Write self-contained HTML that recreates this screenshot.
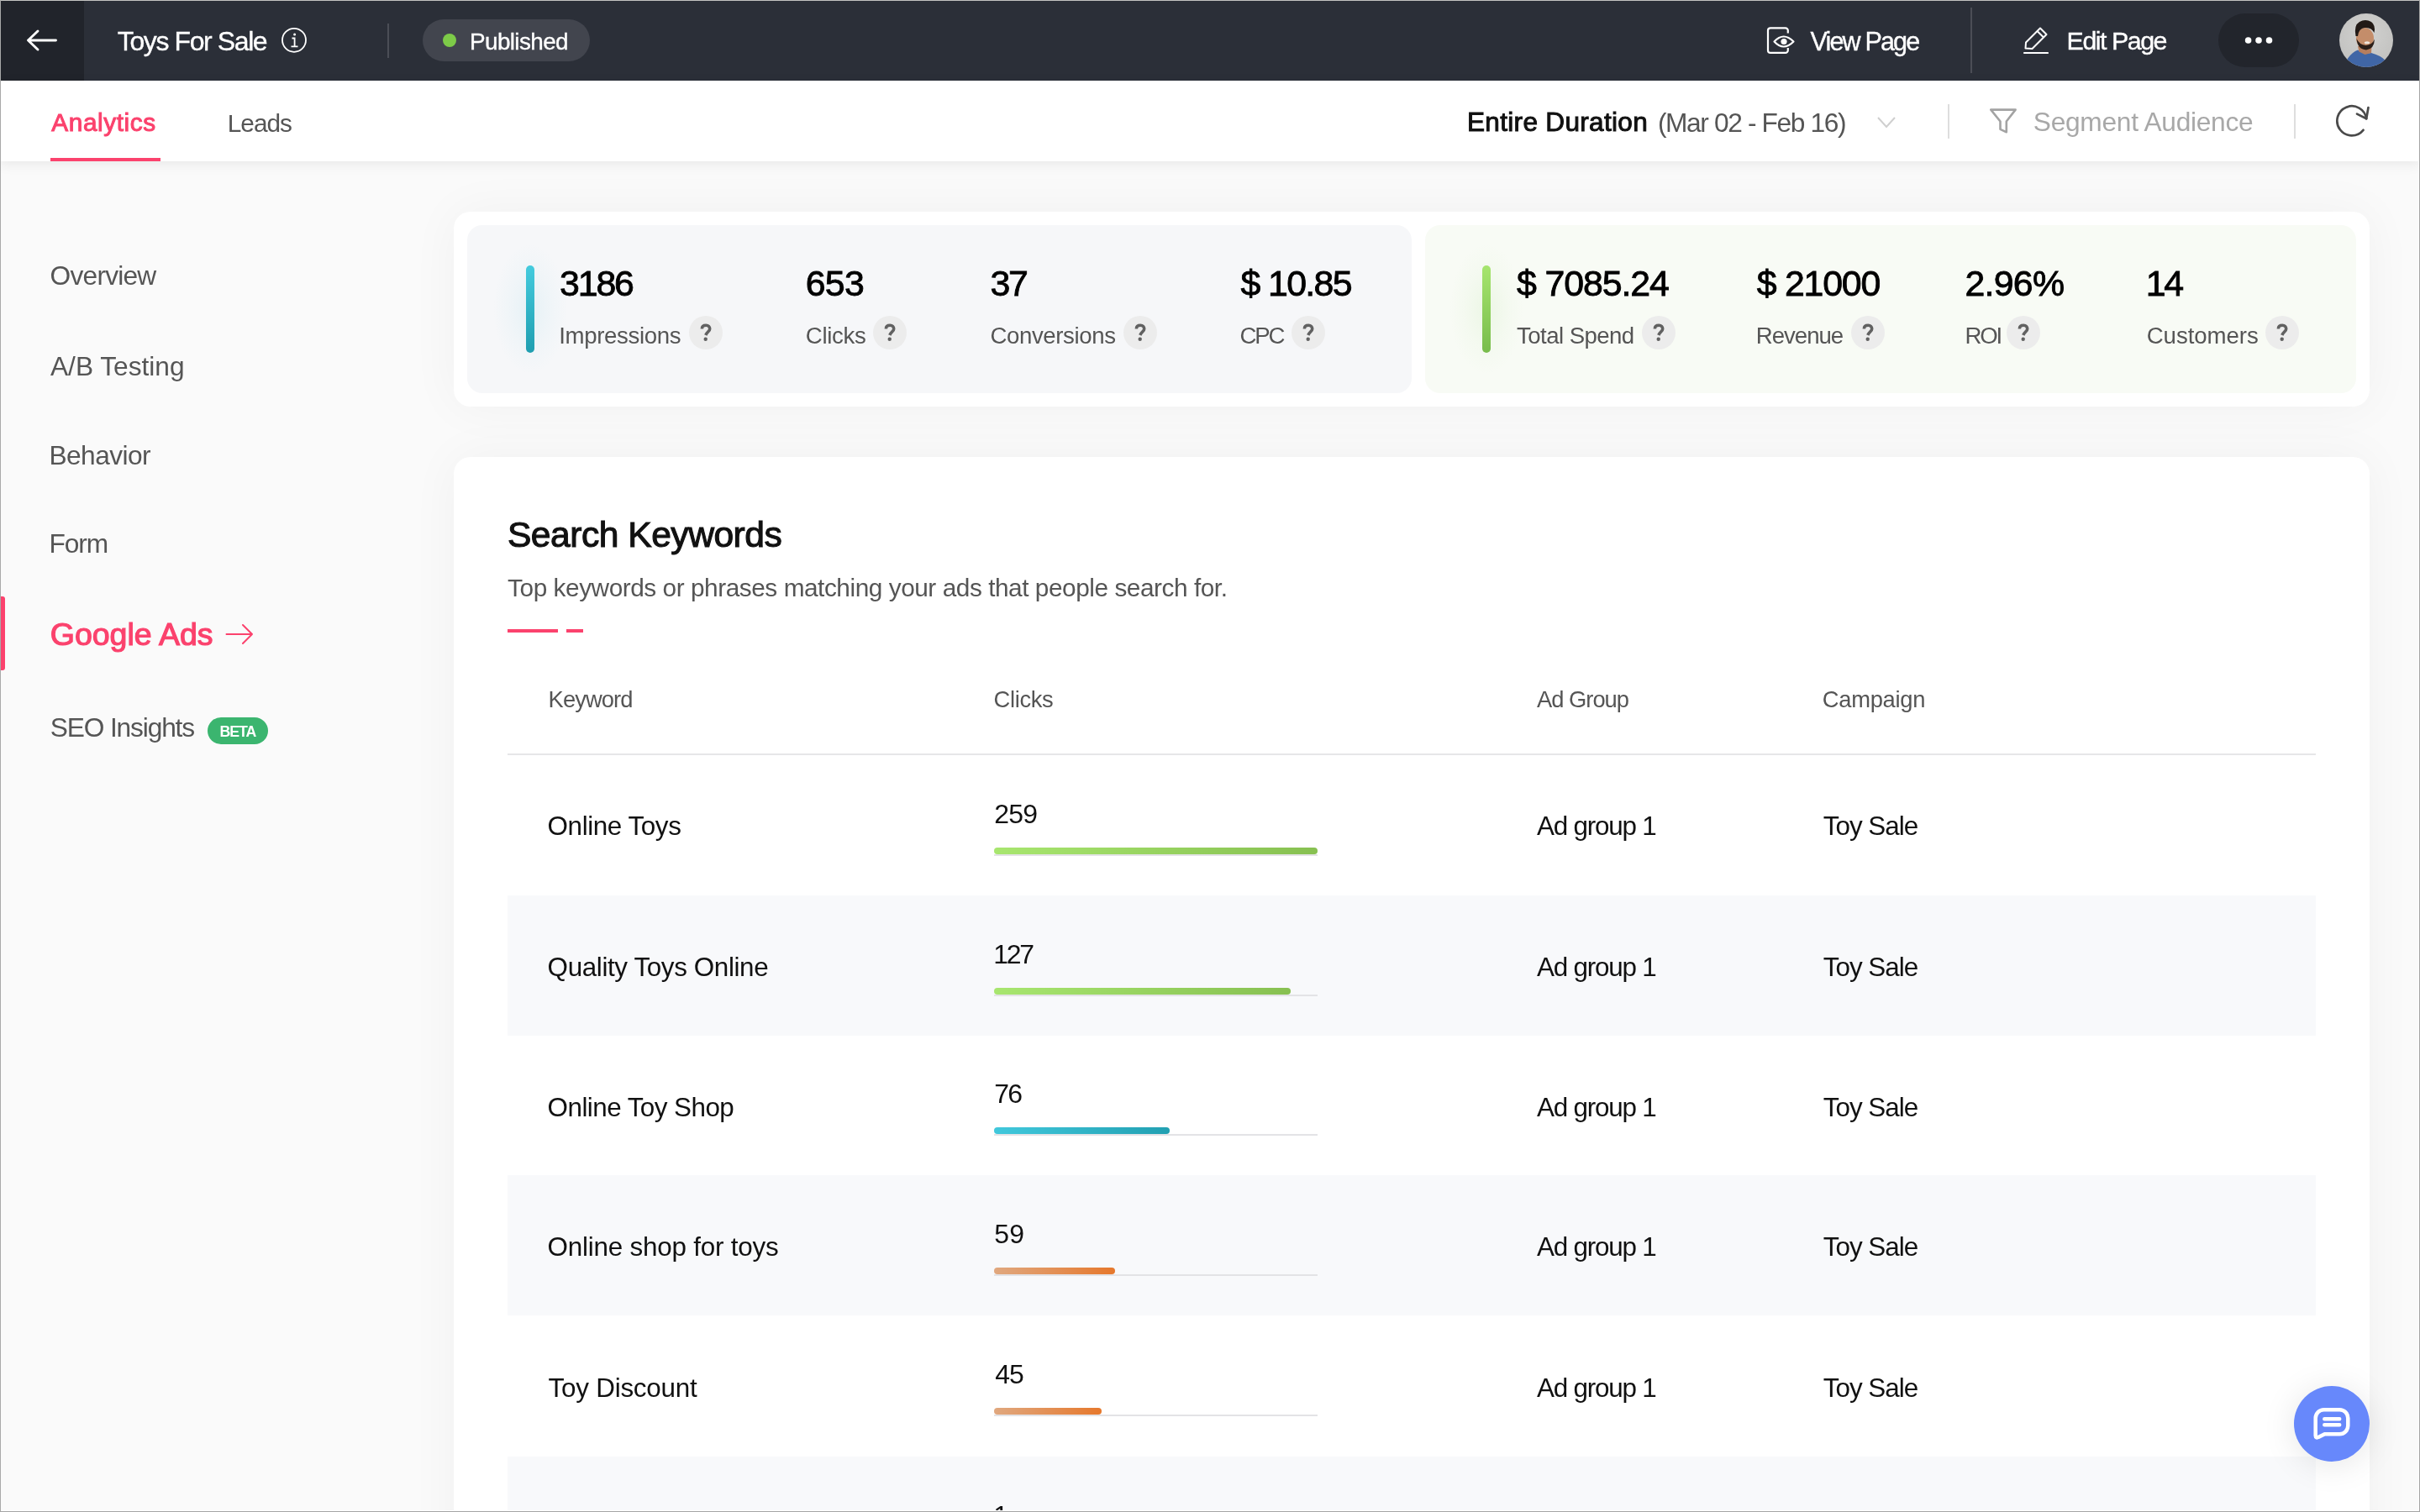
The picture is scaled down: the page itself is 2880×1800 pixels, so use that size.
<!DOCTYPE html>
<html><head><meta charset="utf-8"><style>
html,body{margin:0;padding:0;}
body{width:2880px;height:1800px;position:relative;overflow:hidden;background:#fafafa;font-family:"Liberation Sans",sans-serif;}
.abs{position:absolute;}
.t{position:absolute;white-space:nowrap;line-height:60px;font-family:"Liberation Sans",sans-serif;}
#tx{position:absolute;left:0;top:0;width:2880px;height:1800px;will-change:transform;}
.q{position:absolute;width:40px;height:40px;border-radius:20px;background:#ececec;}
</style></head><body>
<!-- top bar -->
<div class="abs" style="left:0;top:0;width:2880px;height:96px;background:#2b2f38"></div>
<div class="abs" style="left:0;top:0;width:100px;height:96px;background:#21242b"></div>
<div class="abs" style="left:461px;top:28px;width:2px;height:41px;background:#4b4e56"></div>
<div class="abs" style="left:503px;top:23px;width:199px;height:50px;border-radius:25px;background:#42454e"></div>
<div class="abs" style="left:527px;top:40px;width:16px;height:16px;border-radius:8px;background:#7dcb48"></div>
<div class="abs" style="left:2345px;top:9px;width:2px;height:78px;background:#4b4e56"></div>
<div class="abs" style="left:2640px;top:16px;width:96px;height:64px;border-radius:32px;background:#22252c"></div>
<!-- tab bar -->
<div class="abs" style="left:0;top:96px;width:2880px;height:96px;background:#ffffff;box-shadow:0 4px 14px rgba(0,0,0,0.07)"></div>
<div class="abs" style="left:60px;top:188px;width:131px;height:4px;background:#fb426d"></div>
<div class="abs" style="left:2318px;top:124px;width:2px;height:41px;background:#dedede"></div>
<div class="abs" style="left:2730px;top:124px;width:2px;height:41px;background:#dedede"></div>
<!-- sidebar indicator -->
<div class="abs" style="left:1px;top:710px;width:5px;height:88px;border-radius:0 3px 3px 0;background:#fb426d"></div>
<div class="abs" style="left:247px;top:854px;width:72px;height:32px;border-radius:16px;background:#3bb56f"></div>
<!-- stats card -->
<div class="abs" style="left:540px;top:252px;width:2280px;height:232px;border-radius:20px;background:#fff;box-shadow:0 0 60px rgba(0,0,0,0.045)"></div>
<div class="abs" style="left:556px;top:268px;width:1124px;height:200px;border-radius:18px;background:#f6f7f9"></div>
<div class="abs" style="left:1696px;top:268px;width:1108px;height:200px;border-radius:18px;background:#f8fbf5"></div>
<div class="abs" style="left:587px;top:290px;width:88px;height:156px;background:radial-gradient(closest-side, rgba(70,185,215,0.09), rgba(70,185,215,0.03) 60%, rgba(70,185,215,0))"></div>
<div class="abs" style="left:626px;top:316px;width:10px;height:104px;border-radius:5px;background:linear-gradient(180deg,#44cbde,#1f9eb0)"></div>
<div class="abs" style="left:1725px;top:290px;width:88px;height:156px;background:radial-gradient(closest-side, rgba(130,205,90,0.10), rgba(130,205,90,0.03) 60%, rgba(130,205,90,0))"></div>
<div class="abs" style="left:1764px;top:316px;width:10px;height:104px;border-radius:5px;background:linear-gradient(180deg,#a6e56e,#78bc4b)"></div>
<div class="q" style="left:820px;top:376px"></div>
<div class="q" style="left:1039px;top:376px"></div>
<div class="q" style="left:1337px;top:376px"></div>
<div class="q" style="left:1537px;top:376px"></div>
<div class="q" style="left:1954px;top:376px"></div>
<div class="q" style="left:2203px;top:376px"></div>
<div class="q" style="left:2388px;top:376px"></div>
<div class="q" style="left:2696px;top:376px"></div>
<!-- keywords card -->
<div class="abs" style="left:540px;top:544px;width:2280px;height:1400px;border-radius:20px;background:#fff;box-shadow:0 0 60px rgba(0,0,0,0.045)"></div>
<div class="abs" style="left:604px;top:749px;width:60px;height:4px;background:#fb426d"></div>
<div class="abs" style="left:674px;top:749px;width:20px;height:4px;background:#fb426d"></div>
<div class="abs" style="left:604px;top:897px;width:2152px;height:2px;background:#e6e6e8"></div>
<div class="abs" style="left:1183px;top:1016.5px;width:385px;height:2px;background:#e3e3e6"></div>
<div class="abs" style="left:1183px;top:1008.5px;width:385px;height:8px;border-radius:4px;background:linear-gradient(90deg,#a8e66f,#87c051)"></div>
<div class="abs" style="left:604px;top:1066px;width:2152px;height:167px;background:#f8f9fb"></div>
<div class="abs" style="left:1183px;top:1183.5px;width:385px;height:2px;background:#e3e3e6"></div>
<div class="abs" style="left:1183px;top:1175.5px;width:353px;height:8px;border-radius:4px;background:linear-gradient(90deg,#a8e66f,#87c051)"></div>
<div class="abs" style="left:1183px;top:1350.0px;width:385px;height:2px;background:#e3e3e6"></div>
<div class="abs" style="left:1183px;top:1342.0px;width:209px;height:8px;border-radius:4px;background:linear-gradient(90deg,#41c8dc,#22a0b2)"></div>
<div class="abs" style="left:604px;top:1399px;width:2152px;height:167px;background:#f8f9fb"></div>
<div class="abs" style="left:1183px;top:1516.5px;width:385px;height:2px;background:#e3e3e6"></div>
<div class="abs" style="left:1183px;top:1508.5px;width:144px;height:8px;border-radius:4px;background:linear-gradient(90deg,#e0a87f,#e6782c)"></div>
<div class="abs" style="left:1183px;top:1684.0px;width:385px;height:2px;background:#e3e3e6"></div>
<div class="abs" style="left:1183px;top:1676.0px;width:128px;height:8px;border-radius:4px;background:linear-gradient(90deg,#e0a87f,#e6782c)"></div>
<div class="abs" style="left:604px;top:1734px;width:2152px;height:167px;background:#f8f9fb"></div>
<div class="abs" style="left:1183px;top:1851.5px;width:385px;height:2px;background:#e3e3e6"></div>
<div class="abs" style="left:1183px;top:1843.5px;width:17px;height:8px;border-radius:4px;background:linear-gradient(90deg,#e0a87f,#e6782c)"></div>
<!-- texts -->
<div id="tx">
<div class="t" style="left:139.80px;top:19.28px;font-size:31.98px;letter-spacing:-1.383px;font-weight:400;-webkit-text-stroke:0.35px #ffffff;color:#ffffff">Toys For Sale</div>
<div class="t" style="left:559.00px;top:19.68px;font-size:27.91px;letter-spacing:-0.625px;font-weight:400;-webkit-text-stroke:0.35px #ffffff;color:#ffffff">Published</div>
<div class="t" style="left:2154.60px;top:18.79px;font-size:30.52px;letter-spacing:-1.851px;font-weight:400;-webkit-text-stroke:0.35px #ffffff;color:#ffffff">View Page</div>
<div class="t" style="left:2459.60px;top:18.38px;font-size:30.38px;letter-spacing:-1.475px;font-weight:400;-webkit-text-stroke:0.35px #ffffff;color:#ffffff">Edit Page</div>
<div class="t" style="left:61.30px;top:116.16px;font-size:29.8px;letter-spacing:0.575px;font-weight:400;-webkit-text-stroke:1.0px #fb426d;color:#fb426d">Analytics</div>
<div class="t" style="left:270.80px;top:116.66px;font-size:29.8px;letter-spacing:-1.0px;font-weight:400;color:#555555">Leads</div>
<div class="t" style="left:1746.00px;top:114.96px;font-size:31.54px;letter-spacing:0.314px;font-weight:400;-webkit-text-stroke:1.0px #111111;color:#111111">Entire Duration</div>
<div class="t" style="left:1972.90px;top:115.66px;font-size:31.69px;letter-spacing:-1.363px;font-weight:400;color:#555555">(Mar 02 - Feb 16)</div>
<div class="t" style="left:2419.80px;top:115.26px;font-size:31.69px;letter-spacing:-0.28px;font-weight:400;color:#a8a8a8">Segment Audience</div>
<div class="t" style="left:59.60px;top:297.66px;font-size:31.69px;letter-spacing:-0.772px;font-weight:400;color:#555555">Overview</div>
<div class="t" style="left:60.00px;top:405.86px;font-size:31.69px;letter-spacing:-0.02px;font-weight:400;color:#555555">A/B Testing</div>
<div class="t" style="left:58.50px;top:511.86px;font-size:31.69px;letter-spacing:-0.571px;font-weight:400;color:#555555">Behavior</div>
<div class="t" style="left:58.50px;top:616.86px;font-size:31.69px;letter-spacing:-1.133px;font-weight:400;color:#555555">Form</div>
<div class="t" style="left:59.80px;top:724.96px;font-size:37.5px;letter-spacing:-0.022px;font-weight:400;-webkit-text-stroke:1.2px #fb426d;color:#fb426d">Google Ads</div>
<div class="t" style="left:59.80px;top:836.26px;font-size:31.69px;letter-spacing:-1.146px;font-weight:400;color:#555555">SEO Insights</div>
<div class="t" style="left:261.60px;top:841.10px;font-size:17.73px;letter-spacing:-1.067px;font-weight:700;color:#ffffff">BETA</div>
<div class="t" style="left:666.10px;top:306.64px;font-size:42.88px;letter-spacing:-2.2px;font-weight:400;-webkit-text-stroke:0.85px #000000;color:#000000">3186</div>
<div class="t" style="left:958.80px;top:306.64px;font-size:42.88px;letter-spacing:-0.8px;font-weight:400;-webkit-text-stroke:0.85px #000000;color:#000000">653</div>
<div class="t" style="left:1178.40px;top:306.64px;font-size:42.88px;letter-spacing:-2.2px;font-weight:400;-webkit-text-stroke:0.85px #000000;color:#000000">37</div>
<div class="t" style="left:1476.60px;top:306.64px;font-size:42.88px;letter-spacing:-1.667px;font-weight:400;-webkit-text-stroke:0.85px #000000;color:#000000">$ 10.85</div>
<div class="t" style="left:1805.00px;top:306.64px;font-size:42.88px;letter-spacing:-1.125px;font-weight:400;-webkit-text-stroke:0.85px #000000;color:#000000">$ 7085.24</div>
<div class="t" style="left:2090.70px;top:306.64px;font-size:42.88px;letter-spacing:-1.233px;font-weight:400;-webkit-text-stroke:0.85px #000000;color:#000000">$ 21000</div>
<div class="t" style="left:2338.50px;top:306.64px;font-size:42.88px;letter-spacing:-0.75px;font-weight:400;-webkit-text-stroke:0.85px #000000;color:#000000">2.96%</div>
<div class="t" style="left:2553.70px;top:306.64px;font-size:42.88px;letter-spacing:-2.2px;font-weight:400;-webkit-text-stroke:0.85px #000000;color:#000000">14</div>
<div class="t" style="left:665.30px;top:369.66px;font-size:27.62px;letter-spacing:-0.36px;font-weight:400;color:#555555">Impressions</div>
<div class="t" style="left:958.80px;top:369.66px;font-size:27.62px;letter-spacing:-0.32px;font-weight:400;color:#555555">Clicks</div>
<div class="t" style="left:1178.40px;top:369.66px;font-size:27.62px;letter-spacing:-0.38px;font-weight:400;color:#555555">Conversions</div>
<div class="t" style="left:1475.60px;top:369.66px;font-size:27.62px;letter-spacing:-2.2px;font-weight:400;color:#555555">CPC</div>
<div class="t" style="left:1805.00px;top:369.66px;font-size:27.62px;letter-spacing:-0.56px;font-weight:400;color:#555555">Total Spend</div>
<div class="t" style="left:2089.70px;top:369.66px;font-size:27.62px;letter-spacing:-1.0px;font-weight:400;color:#555555">Revenue</div>
<div class="t" style="left:2338.50px;top:369.66px;font-size:27.62px;letter-spacing:-2.2px;font-weight:400;color:#555555">ROI</div>
<div class="t" style="left:2554.70px;top:369.66px;font-size:27.62px;letter-spacing:-0.049px;font-weight:400;color:#555555">Customers</div>
<div class="t" style="left:603.90px;top:606.41px;font-size:42.59px;letter-spacing:-0.486px;font-weight:400;-webkit-text-stroke:1.1px #111111;color:#111111">Search Keywords</div>
<div class="t" style="left:604.10px;top:669.66px;font-size:29.8px;letter-spacing:-0.457px;font-weight:400;color:#555555">Top keywords or phrases matching your ads that people search for.</div>
<div class="t" style="left:652.60px;top:802.66px;font-size:27.33px;letter-spacing:-0.9px;font-weight:400;color:#555555">Keyword</div>
<div class="t" style="left:1182.50px;top:802.66px;font-size:27.33px;letter-spacing:-0.32px;font-weight:400;color:#555555">Clicks</div>
<div class="t" style="left:1829.00px;top:802.66px;font-size:27.33px;letter-spacing:-1.0px;font-weight:400;color:#555555">Ad Group</div>
<div class="t" style="left:2168.80px;top:802.66px;font-size:27.33px;letter-spacing:-0.286px;font-weight:400;color:#555555">Campaign</div>
<div class="t" style="left:651.60px;top:954.26px;font-size:31.4px;letter-spacing:-0.42px;font-weight:400;color:#111111">Online Toys</div>
<div class="t" style="left:1183.20px;top:938.96px;font-size:31.98px;letter-spacing:-0.7px;font-weight:400;color:#111111">259</div>
<div class="t" style="left:1829.00px;top:954.26px;font-size:31.4px;letter-spacing:-1.222px;font-weight:400;color:#111111">Ad group 1</div>
<div class="t" style="left:2169.80px;top:954.26px;font-size:31.4px;letter-spacing:-1.0px;font-weight:400;color:#111111">Toy Sale</div>
<div class="t" style="left:651.60px;top:1122.16px;font-size:31.4px;letter-spacing:-0.378px;font-weight:400;color:#111111">Quality Toys Online</div>
<div class="t" style="left:1182.20px;top:1105.96px;font-size:31.98px;letter-spacing:-2.2px;font-weight:400;color:#111111">127</div>
<div class="t" style="left:1829.00px;top:1122.16px;font-size:31.4px;letter-spacing:-1.222px;font-weight:400;color:#111111">Ad group 1</div>
<div class="t" style="left:2169.80px;top:1122.16px;font-size:31.4px;letter-spacing:-1.0px;font-weight:400;color:#111111">Toy Sale</div>
<div class="t" style="left:651.60px;top:1288.66px;font-size:31.4px;letter-spacing:-0.543px;font-weight:400;color:#111111">Online Toy Shop</div>
<div class="t" style="left:1183.20px;top:1272.46px;font-size:31.98px;letter-spacing:-1.6px;font-weight:400;color:#111111">76</div>
<div class="t" style="left:1829.00px;top:1288.66px;font-size:31.4px;letter-spacing:-1.222px;font-weight:400;color:#111111">Ad group 1</div>
<div class="t" style="left:2169.80px;top:1288.66px;font-size:31.4px;letter-spacing:-1.0px;font-weight:400;color:#111111">Toy Sale</div>
<div class="t" style="left:651.60px;top:1455.16px;font-size:31.4px;letter-spacing:-0.211px;font-weight:400;color:#111111">Online shop for toys</div>
<div class="t" style="left:1183.20px;top:1438.96px;font-size:31.98px;letter-spacing:0.4px;font-weight:400;color:#111111">59</div>
<div class="t" style="left:1829.00px;top:1455.16px;font-size:31.4px;letter-spacing:-1.222px;font-weight:400;color:#111111">Ad group 1</div>
<div class="t" style="left:2169.80px;top:1455.16px;font-size:31.4px;letter-spacing:-1.0px;font-weight:400;color:#111111">Toy Sale</div>
<div class="t" style="left:652.60px;top:1622.66px;font-size:31.4px;letter-spacing:-0.236px;font-weight:400;color:#111111">Toy Discount</div>
<div class="t" style="left:1184.20px;top:1606.46px;font-size:31.98px;letter-spacing:-1.0px;font-weight:400;color:#111111">45</div>
<div class="t" style="left:1829.00px;top:1622.66px;font-size:31.4px;letter-spacing:-1.222px;font-weight:400;color:#111111">Ad group 1</div>
<div class="t" style="left:2169.80px;top:1622.66px;font-size:31.4px;letter-spacing:-1.0px;font-weight:400;color:#111111">Toy Sale</div>
<div class="t" style="left:652.60px;top:1790.16px;font-size:31.4px;letter-spacing:1.0px;font-weight:400;color:#111111">Toy Store</div>
<div class="t" style="left:1182.20px;top:1773.96px;font-size:31.98px;letter-spacing:-1.0px;font-weight:400;color:#111111">1</div>
<div class="t" style="left:1829.00px;top:1790.16px;font-size:31.4px;letter-spacing:-1.222px;font-weight:400;color:#111111">Ad group 1</div>
<div class="t" style="left:2169.80px;top:1790.16px;font-size:31.4px;letter-spacing:-1.0px;font-weight:400;color:#111111">Toy Sale</div>
</div>
<!-- icons overlay -->
<svg class="abs" style="left:0;top:0" width="2880" height="1800" viewBox="0 0 2880 1800" fill="none">
 <!-- back arrow -->
 <path d="M66.5 48H33.5M45 37L33.5 48L45 59" stroke="#fff" stroke-width="2.9" stroke-linecap="round" stroke-linejoin="round"/>
 <!-- info icon -->
 <circle cx="350" cy="47.8" r="14" stroke="#fff" stroke-width="1.8"/>
 <circle cx="350.6" cy="41" r="1.5" fill="#fff"/>
 <path d="M347.5 45.5H350.6V55M346.5 55.3H354.5" stroke="#fff" stroke-width="1.8"/>
 <!-- view page icon -->
 <path d="M2127.8 39.5V36.3A3 3 0 0 0 2124.8 33.3H2107A3 3 0 0 0 2104 36.3V59.9A3 3 0 0 0 2107 62.9H2124.8A3 3 0 0 0 2127.8 59.9V57" stroke="#fff" stroke-width="2.2"/>
 <path d="M2111.5 49.5Q2122.5 37.5 2134.5 49.5Q2122.5 61.5 2111.5 49.5Z" stroke="#fff" stroke-width="2.2" stroke-linejoin="round"/>
 <circle cx="2123" cy="49.5" r="3.6" fill="#fff"/>
 <!-- edit icon -->
 <path d="M2410.5 57.5L2411 50.5L2428 33.5L2435.5 41L2418.5 58Z M2424.5 37L2432 44.5" stroke="#fff" stroke-width="2" stroke-linejoin="round"/>
 <path d="M2409 63H2437" stroke="#fff" stroke-width="2.2" stroke-linecap="round"/>
 <!-- more dots -->
 <circle cx="2675.6" cy="48" r="3.8" fill="#fff"/><circle cx="2688" cy="48" r="3.8" fill="#fff"/><circle cx="2700.5" cy="48" r="3.8" fill="#fff"/>
 <!-- avatar -->
 <defs><clipPath id="av"><circle cx="2816" cy="48" r="32"/></clipPath>
 <radialGradient id="avbg" cx="0.5" cy="0.4" r="0.6"><stop offset="0" stop-color="#d2d2d0"/><stop offset="1" stop-color="#c2c2c0"/></radialGradient></defs>
 <g clip-path="url(#av)">
  <rect x="2784" y="16" width="64" height="64" fill="url(#avbg)"/>
  <path d="M2788 86L2793 71Q2799 62 2806 59.5L2814 64L2822 63Q2833 66 2839 72L2844 86Z" fill="#4066a6"/>
  <path d="M2806 55L2807.5 61.5L2814.5 65L2822 63L2822.5 55Z" fill="#b67e5e"/>
  <ellipse cx="2814.5" cy="45.5" rx="10.5" ry="12.5" fill="#c48d6a"/>
  <path d="M2803.5 43Q2801 30 2808 26Q2815 22 2822 26Q2827.5 30 2825.5 39Q2822 32 2814 33Q2807 34 2806 43Z" fill="#221a16"/>
  <path d="M2804.5 46Q2805.5 58.5 2816 59.5Q2825.5 58.5 2826 46.5Q2823 53.5 2815.5 54Q2808 53.5 2804.5 46Z" fill="#2b1f19"/>
  <ellipse cx="2817" cy="50.8" rx="3.2" ry="1.5" fill="#eee5dc"/>
 </g>
 <!-- chevron -->
 <path d="M2235 140L2245 151L2255 140" stroke="#cfcfcf" stroke-width="2"/>
 <!-- funnel -->
 <path d="M2369.3 130.6H2398.6L2387.8 144.5V157.3L2380.5 153.8V144.5Z" stroke="#a3a3a3" stroke-width="2.6" stroke-linejoin="round"/>
 <!-- refresh -->
 <path d="M2812.5 154.8A17.5 17.5 0 1 1 2816.2 141.4" stroke="#4a4a4a" stroke-width="2.7" stroke-linecap="round"/>
 <path d="M2805 135.6L2816.2 141.2L2818.5 128" stroke="#4a4a4a" stroke-width="2.7" stroke-linecap="round" stroke-linejoin="round"/>
 <!-- google ads arrow -->
 <path d="M269.5 755H300M289 744L300 755L289 766" stroke="#fb426d" stroke-width="2" stroke-linecap="round" stroke-linejoin="round"/>
 <!-- ? marks -->
<g transform="translate(840 396)"><path d="M-4.6 -4.6C-4.6 -7.9 -2.3 -8.7 0.3 -8.7C3.1 -8.7 4.7 -6.9 4.7 -4.6C4.7 -1.6 1.3 -0.9 -0.2 3" stroke="#616161" stroke-width="3.6"/><circle cx="-0.3" cy="7.7" r="2.2" fill="#616161"/></g>
<g transform="translate(1059 396)"><path d="M-4.6 -4.6C-4.6 -7.9 -2.3 -8.7 0.3 -8.7C3.1 -8.7 4.7 -6.9 4.7 -4.6C4.7 -1.6 1.3 -0.9 -0.2 3" stroke="#616161" stroke-width="3.6"/><circle cx="-0.3" cy="7.7" r="2.2" fill="#616161"/></g>
<g transform="translate(1357 396)"><path d="M-4.6 -4.6C-4.6 -7.9 -2.3 -8.7 0.3 -8.7C3.1 -8.7 4.7 -6.9 4.7 -4.6C4.7 -1.6 1.3 -0.9 -0.2 3" stroke="#616161" stroke-width="3.6"/><circle cx="-0.3" cy="7.7" r="2.2" fill="#616161"/></g>
<g transform="translate(1557 396)"><path d="M-4.6 -4.6C-4.6 -7.9 -2.3 -8.7 0.3 -8.7C3.1 -8.7 4.7 -6.9 4.7 -4.6C4.7 -1.6 1.3 -0.9 -0.2 3" stroke="#616161" stroke-width="3.6"/><circle cx="-0.3" cy="7.7" r="2.2" fill="#616161"/></g>
<g transform="translate(1974 396)"><path d="M-4.6 -4.6C-4.6 -7.9 -2.3 -8.7 0.3 -8.7C3.1 -8.7 4.7 -6.9 4.7 -4.6C4.7 -1.6 1.3 -0.9 -0.2 3" stroke="#616161" stroke-width="3.6"/><circle cx="-0.3" cy="7.7" r="2.2" fill="#616161"/></g>
<g transform="translate(2223 396)"><path d="M-4.6 -4.6C-4.6 -7.9 -2.3 -8.7 0.3 -8.7C3.1 -8.7 4.7 -6.9 4.7 -4.6C4.7 -1.6 1.3 -0.9 -0.2 3" stroke="#616161" stroke-width="3.6"/><circle cx="-0.3" cy="7.7" r="2.2" fill="#616161"/></g>
<g transform="translate(2408 396)"><path d="M-4.6 -4.6C-4.6 -7.9 -2.3 -8.7 0.3 -8.7C3.1 -8.7 4.7 -6.9 4.7 -4.6C4.7 -1.6 1.3 -0.9 -0.2 3" stroke="#616161" stroke-width="3.6"/><circle cx="-0.3" cy="7.7" r="2.2" fill="#616161"/></g>
<g transform="translate(2716 396)"><path d="M-4.6 -4.6C-4.6 -7.9 -2.3 -8.7 0.3 -8.7C3.1 -8.7 4.7 -6.9 4.7 -4.6C4.7 -1.6 1.3 -0.9 -0.2 3" stroke="#616161" stroke-width="3.6"/><circle cx="-0.3" cy="7.7" r="2.2" fill="#616161"/></g>
</svg>
<!-- chat button -->
<div class="abs" style="left:2730px;top:1650px;width:90px;height:90px;border-radius:45px;background:#6788fb;box-shadow:0 4px 40px rgba(0,0,0,0.10)"></div>
<svg class="abs" style="left:2730px;top:1650px" width="90" height="90" viewBox="0 0 90 90" fill="none">
 <path d="M25.7 59V38.2A10 10 0 0 1 35.7 28.2H54.3A10 10 0 0 1 64.3 38.2V47.3A10 10 0 0 1 54.3 57.3H36.5L29.5 60.8Q25.7 62.6 25.7 59Z" stroke="#fff" stroke-width="4.5" stroke-linejoin="round"/>
 <path d="M36.3 39.3H54.2M36.3 46.3H54.2" stroke="#fff" stroke-width="4.5" stroke-linecap="round"/>
</svg>
<!-- frame -->
<div class="abs" style="left:0;top:0;width:2880px;height:1px;background:#c4c4c2"></div>
<div class="abs" style="left:0;top:0;width:1px;height:1800px;background:#a9a9a9"></div>
<div class="abs" style="left:2878px;top:96px;width:1px;height:1703px;background:#ffffff"></div>
<div class="abs" style="left:2879px;top:0;width:1px;height:1800px;background:#a5a5a5"></div>
<div class="abs" style="left:1px;top:1798px;width:2878px;height:1px;background:#ffffff"></div>
<div class="abs" style="left:0;top:1799px;width:2880px;height:1px;background:#a5a5a5"></div>
</body></html>
